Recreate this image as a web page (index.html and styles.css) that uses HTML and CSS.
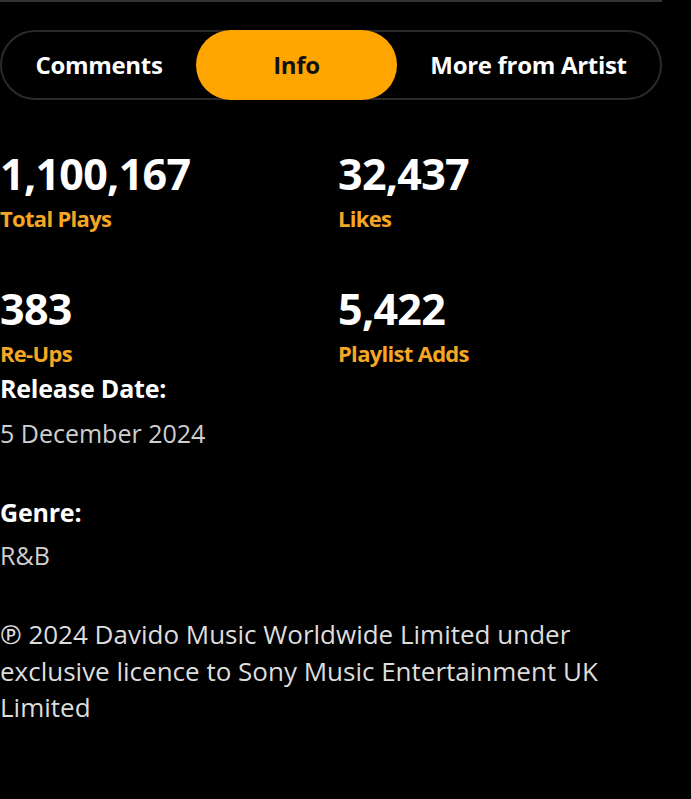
FILE: index.html
```html
<!DOCTYPE html>
<html>
<head>
<meta charset="utf-8">
<link rel="stylesheet" href="styles.css">
</head>
<body>
<div class="page">
  <div class="topline"></div>
  <nav class="tabs">
    <div class="tab">Comments</div>
    <div class="tab active">Info</div>
    <div class="tab">More from Artist</div>
  </nav>
  <section class="stats">
    <div class="stat">
      <div class="num">1,100,167</div>
      <div class="label">Total Plays</div>
    </div>
    <div class="stat">
      <div class="num">32,437</div>
      <div class="label">Likes</div>
    </div>
    <div class="stat">
      <div class="num">383</div>
      <div class="label">Re-Ups</div>
    </div>
    <div class="stat">
      <div class="num">5,422</div>
      <div class="label">Playlist Adds</div>
    </div>
  </section>
  <section class="meta">
    <div class="meta-title first">Release Date:</div>
    <div class="meta-value">5 December 2024</div>
    <div class="meta-title gap">Genre:</div>
    <div class="meta-value">R&amp;B</div>
  </section>
  <p class="copyright">℗ 2024 Davido Music Worldwide Limited under exclusive licence to Sony Music Entertainment UK Limited</p>
</div>
</body>
</html>
```
FILE: styles.css
```css
html, body {
  margin: 0;
  padding: 0;
  background: #000;
}
body {
  font-family: "Open Sans", "Noto Sans", sans-serif;
  color: #fff;
}
.page {
  width: 662px;
}
.topline {
  height: 2px;
  background: #333;
}
.tabs {
  margin-top: 28px;
  height: 70px;
  box-sizing: border-box;
  border: 2px solid #2a2a2a;
  border-radius: 35px;
  display: grid;
  grid-template-columns: 194px 201px 1fr;
  align-items: stretch;
}
.tab {
  display: flex;
  align-items: center;
  justify-content: center;
  font-size: 24px;
  font-weight: 700;
  color: #fff;
  letter-spacing: -0.3px;
  padding-bottom: 2px;
}
.tab.active {
  background: #ffa500;
  color: #111;
  border-radius: 35px;
  margin: -2px 0;
}
.stats {
  margin-top: 50px;
  display: grid;
  grid-template-columns: 338px 1fr;
  row-gap: 51px;
}
.num {
  font-size: 43px;
  font-weight: 700;
  line-height: 48px;
  letter-spacing: -0.7px;
}
.label {
  margin-top: 4px;
  font-size: 22px;
  font-weight: 700;
  color: #f5a623;
  line-height: 32px;
  letter-spacing: -0.7px;
}
.meta-title {
  font-size: 25px;
  font-weight: 700;
  line-height: 34px;
  letter-spacing: -0.2px;
}
.meta-title.first {
  margin-top: 2px;
}
.meta-title.gap {
  margin-top: 45px;
}
.meta-value {
  font-size: 25px;
  font-weight: 400;
  color: #cfcfcf;
  line-height: 34px;
  margin-top: 11px;
  letter-spacing: 0;
}
.meta-value:last-child {
  margin-top: 9px;
}
.copyright {
  margin: 44px 0 0;
  font-size: 26px;
  line-height: 36.5px;
  color: #ddd;
  font-weight: 400;
  letter-spacing: 0;
}
```
